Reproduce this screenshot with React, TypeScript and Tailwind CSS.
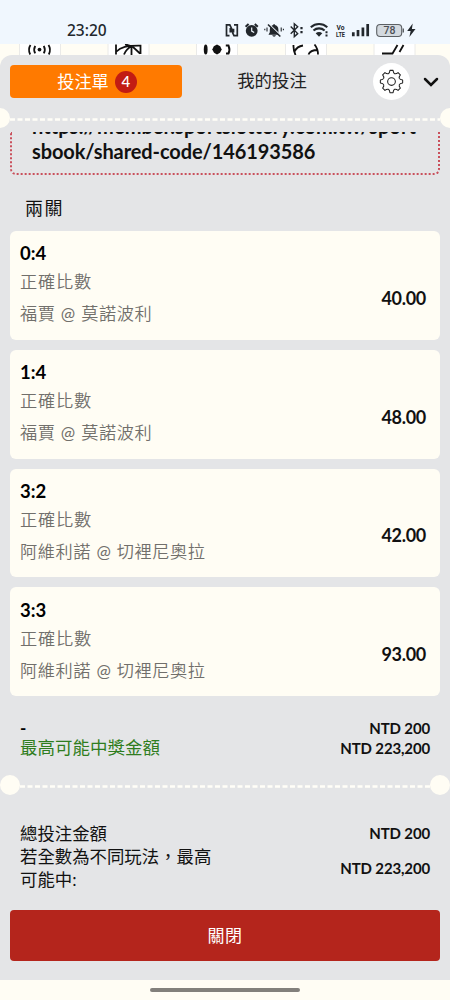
import type { ReactNode } from 'react';

interface Bet {
  score: string;
  market: string;
  home: string;
  away: string;
  odds: string;
}

const bets: Bet[] = [
  { score: '0:4', market: '正確比數', home: '福賈', away: '莫諾波利', odds: '40.00' },
  { score: '1:4', market: '正確比數', home: '福賈', away: '莫諾波利', odds: '48.00' },
  { score: '3:2', market: '正確比數', home: '阿維利諾', away: '切裡尼奧拉', odds: '42.00' },
  { score: '3:3', market: '正確比數', home: '阿維利諾', away: '切裡尼奧拉', odds: '93.00' },
];

function StatusIcons() {
  return (
    <svg width="194" height="20" viewBox="224 20 194 20" fill="none" stroke="#22272c" strokeWidth="1.6">
      {/* NFC */}
      <path d="M229.500 35.600h-3V24.900h3.300l3.700 7.600v-3.700M234 24.900h3.300v10.700H234l-3.700-7.600v4.500" strokeWidth="1.700" />
      {/* alarm */}
      <circle cx="251.700" cy="30.800" r="5.900" fill="#22272c" stroke="none" />
      <path d="M245.600 26.800l3-2.700M257.800 26.800l-3-2.700" strokeWidth="2" />
      <path d="M251.700 27.400v3.700l2.500 1.500" stroke="#f0f7fe" strokeWidth="1.200" />
      {/* muted bell */}
      <path d="M268.500 34.700l1.300-2.500v-2.400c0-2.800 1.500-4.300 3.500-4.700v-.9h1.600v.9c2 .4 3.500 1.900 3.500 4.700v2.400l1.300 2.500zM272.200 35.300h3.800c-.6 1.800-3.200 1.800-3.800 0z" fill="#22272c" stroke="none" />
      <path d="M269 24.200l12 11.500" stroke="#f0f7fe" strokeWidth="1.300" />
      <path d="M268 24.500l12.300 12" strokeWidth="1.600" />
      <path d="M267 27.500v4M264.800 28.800v1.500M281.200 27.500v4M283.400 28.800v1.500" strokeWidth="1.100" />
      {/* bluetooth */}
      <path d="M290.700 26.600l7 7-3.400 3V23.700l3.400 3-7 7" strokeWidth="1.400" />
      <path d="M301.500 27v2.200M301.500 31v2.200" strokeWidth="2.200" />
      {/* wifi */}
      <path d="M310.800 27.200c4.900-4.300 11.600-4.300 16.500 0M313.500 30.500c3.200-2.800 7.900-2.800 11.100 0" strokeWidth="2.100" />
      <path d="M315.700 33.200c1.900-1.700 4.700-1.700 6.600 0l-3.300 3.500z" fill="#22272c" stroke="none" />
      <path d="M326.500 31.300v2M326.500 34.500v2" strokeWidth="2" />
      {/* signal */}
      <path d="M353.300 32.300v4M358 30v6.300M362.900 27.500v8.800M367.700 24v12.300" strokeWidth="2.700" />
      {/* battery */}
      <rect x="376.700" y="24.500" width="25" height="12" rx="3.500" fill="#d3d9df" stroke="#5c6064" strokeWidth="1.100" />
      <path d="M403.300 28.500v4" stroke="#5c6064" strokeWidth="1.400" />
      <path d="M412.700 23.500l-5.500 7.500h3.400l-1.200 6 6.100-8h-3.600z" fill="#22272c" stroke="none" />
      <g fill="#22272c" stroke="none" className="font-['Roboto',sans-serif] font-bold">
        <text x="340.500" y="29.500" fontSize="7.500" textAnchor="middle" textLength="8" lengthAdjust="spacingAndGlyphs">Vo</text>
        <text x="340.500" y="36.500" fontSize="7.500" textAnchor="middle" textLength="9" lengthAdjust="spacingAndGlyphs">LTE</text>
      </g>
      <text x="389.500" y="34.300" fontSize="10.500" textAnchor="middle" fill="#4b4f54" stroke="none" className="font-['Roboto',sans-serif] font-medium">78</text>
    </svg>
  );
}

/* Lower edge of the sport tabs that peeks out above the sheet */
function SportStrip() {
  return (
    <svg width="450" height="11" viewBox="0 44 450 11" fill="none" stroke="#111" strokeWidth="1.800" className="block">
      <path d="M19.500 44h41v11h-41zM108 44h41v11h-41zM196.500 44h41v11h-41zM285.500 44h41v11h-41zM374 44h41v11h-41z" fill="#fff" stroke="none" />
      <path d="M19.500 44v11M60.500 44v11M108 44v11M149 44v11M196.500 44v11M237.500 44v11M285.500 44v11M326.500 44v11M374 44v11M415 44v11" stroke="#eaeae8" strokeWidth="1" />
      <path d="M30.500 45c-2 3-2 6-.3 9.500M35.200 45.800c-1.400 2.700-1.400 5 0 7.600M48.500 45c2 3 2 6 .3 9.500M43.800 45.800c1.400 2.700 1.400 5 0 7.600" />
      <circle cx="39.500" cy="49.600" r="1.900" fill="#111" stroke="none" />
      <path d="M116 44.500v10M116.500 51.500c4-4.500 10-6 24-5.800v8.300M124 54.500c1.500-4 4-6.500 8-8.500l8 7.500M131.500 46v9M125 44.300l7 2" />
      <ellipse cx="205.700" cy="49.500" rx="1.900" ry="5" fill="#111" stroke="none" />
      <path d="M212.300 49.500l1.500-3.300 3.200-1.700 3.200 1.700 1.500 3.300-1.700 3.300-3 1.700-3-1.700z" fill="#111" stroke="none" />
      <path d="M225.800 45.500h2.700c1.200 3 1.200 5.500 0 8h-2.500" strokeWidth="2" />
      <path d="M293.500 45c-.3 4 .3 6 2 10M294.500 51.500c2-4 5-5.500 8.500-6M308.500 54.500c1-3 4-4.500 9.500-4.500M314.500 44.500c2.500 3 3.500 6 3.500 10" />
      <path d="M382 53.500h10.500l5-8.500M399.500 52l4-7" />
    </svg>
  );
}

function Divider({ inset = false }: { inset?: boolean }) {
  return (
    <div className={`flex h-5 shrink-0 items-center ${inset ? '' : '-mx-2.5'}`}>
      <span className="z-10 size-5 shrink-0 rounded-full bg-[#fffdf4]" />
      <svg className="h-[3px] flex-1 translate-y-px" preserveAspectRatio="none">
        <line x1="0" y1="1.5" x2="100%" y2="1.5" stroke="#fffef8" strokeWidth="2.5" strokeDasharray="5 2.5" />
      </svg>
      <span className="z-10 size-5 shrink-0 rounded-full bg-[#fffdf4]" />
    </div>
  );
}

function GearIcon() {
  return (
    <svg width="25" height="25" viewBox="0 0 24 24" fill="none" stroke="#222" strokeWidth="1" strokeLinejoin="round">
      <path d="M10.500 1.300h3c.2 1.900.6 2.800 1.500 3.200 1 .4 1.900.1 3.300-1.100l2.200 2.200c-1.200 1.500-1.400 2.400-1 3.400.4.900 1.300 1.300 3.200 1.500v3c-1.900.2-2.800.6-3.200 1.500-.4 1-.2 1.900 1 3.400l-2.200 2.200c-1.400-1.200-2.300-1.500-3.300-1.100-.9.400-1.300 1.300-1.500 3.200h-3c-.2-1.900-.6-2.800-1.500-3.200-1-.4-1.900-.1-3.300 1.100l-2.200-2.200c1.200-1.500 1.400-2.400 1-3.400-.4-.9-1.300-1.300-3.200-1.500v-3c1.900-.2 2.800-.6 3.200-1.500.4-1 .2-1.900-1-3.400l2.200-2.200C7.100 4.600 8 4.900 9 4.500c.9-.4 1.300-1.300 1.500-3.200z" />
      <circle cx="12" cy="12" r="3.700" />
    </svg>
  );
}

function BetCard({ bet }: { bet: Bet }) {
  return (
    <div className="flex h-[108.800px] items-center justify-between rounded-md bg-[#fffdf4] pr-3.5 pl-2.5">
      <div className="pb-0.5">
        <p className="text-[18.500px] leading-7 font-bold text-black">{bet.score}</p>
        <p className="text-[17.200px] leading-[29px] font-[350] tracking-[0.800px] text-[#716f6b]">{bet.market}</p>
        <p className="mt-0.5 text-[17.200px] leading-[31px] font-[350] tracking-[0.600px] text-[#716f6b]">
          {bet.home} <span className="font-normal">@</span> {bet.away}
        </p>
      </div>
      <span className="pt-[25px] text-[18px] leading-6 font-bold tracking-[-0.300px] text-[#111]">{bet.odds}</span>
    </div>
  );
}

function Amount({ children }: { children: ReactNode }) {
  return <span className="shrink-0 text-[15px] font-bold tracking-[-0.150px] text-[#111]">{children}</span>;
}

export default function App() {
  return (
    <div className="flex h-[1000px] w-[450px] flex-col overflow-hidden bg-[#fffdf4] font-['Lato','Noto_Sans_CJK_TC',sans-serif]">
      <div className="flex h-11 shrink-0 justify-between bg-[#f0f7fe] pt-5 pr-8 pl-[67px]">
        <span className="font-['Noto_Sans',sans-serif] text-[15.500px] leading-[21px] font-medium text-[#22272c]">23:20</span>
        <StatusIcons />
      </div>
      <SportStrip />

      <div className="flex h-[925px] shrink-0 flex-col overflow-hidden rounded-t-xl bg-[#e4e5e7]">
        <div className="flex h-[53px] shrink-0 items-center pl-2.5">
          <button className="flex h-[33px] w-[172px] items-center justify-center gap-1.5 rounded bg-[#ff7a00] pl-0.5 text-[17.200px] text-white">
            投注單
            <span className="flex size-[22px] items-center justify-center rounded-full bg-[#c21c13] text-[15px] font-medium">4</span>
          </button>
          <button className="w-[180px] text-[17.400px] text-[#222]">我的投注</button>
          <button className="ml-[11px] flex size-[37px] items-center justify-center rounded-full bg-white">
            <GearIcon />
          </button>
          <svg width="16" height="10" viewBox="0 0 16 10" className="ml-[13px]" fill="none" stroke="#111" strokeWidth="2.500" strokeLinecap="round">
            <path d="M2 2l6 6 6-6" />
          </svg>
        </div>
        <Divider />

        {/* Scrolled list, the share link is cut off at its top */}
        <div className="mt-[4px] flex h-[643px] shrink-0 flex-col overflow-hidden px-2.5">
          <div className="flex h-[43px] shrink-0 flex-col justify-end rounded-b-md border-2 border-t-0 border-dotted border-[#c9505c] pb-[9px] pl-5 text-[20px] leading-[25px] font-bold tracking-[-0.100px] text-[#111]">
            <span className="tracking-[0.050px] whitespace-nowrap">https://member.sportslottery.com.tw/sport</span>
            <span>sbook/shared-code/146193586</span>
          </div>
          <h2 className="mt-[17px] h-[39px] pl-[15px] text-[18px] leading-8 tracking-[1.500px] text-[#111]">兩關</h2>
          <div className="flex flex-col gap-2.5">
            {bets.map((bet) => (
              <BetCard key={bet.score} bet={bet} />
            ))}
          </div>
          <div className="mt-[22px] px-2.5 leading-5">
            <div className="flex justify-between">
              <span className="text-[17px] font-bold">-</span>
              <Amount>NTD 200</Amount>
            </div>
            <div className="flex justify-between">
              <span className="text-[17.500px] text-[#2f7d20]">最高可能中獎金額</span>
              <Amount>NTD 223,200</Amount>
            </div>
          </div>
        </div>

        <Divider inset />

        <div className="mt-[27px] px-5 text-[17.400px] leading-[23px] text-[#111]">
          <div className="flex items-center justify-between">
            <span>總投注金額</span>
            <Amount>NTD 200</Amount>
          </div>
          <div className="flex items-center justify-between">
            <span className="w-[200px]">若全數為不同玩法，最高可能中:</span>
            <Amount>NTD 223,200</Amount>
          </div>
        </div>
        <button className="mx-2.5 mt-[19px] h-[51px] shrink-0 rounded bg-[#b4251c] text-[17px] tracking-[0.500px] text-white">關閉</button>
      </div>

      <div className="flex h-5 items-center justify-center">
        <span className="h-1 w-[150px] rounded-full bg-[#82807b]" />
      </div>
    </div>
  );
}
